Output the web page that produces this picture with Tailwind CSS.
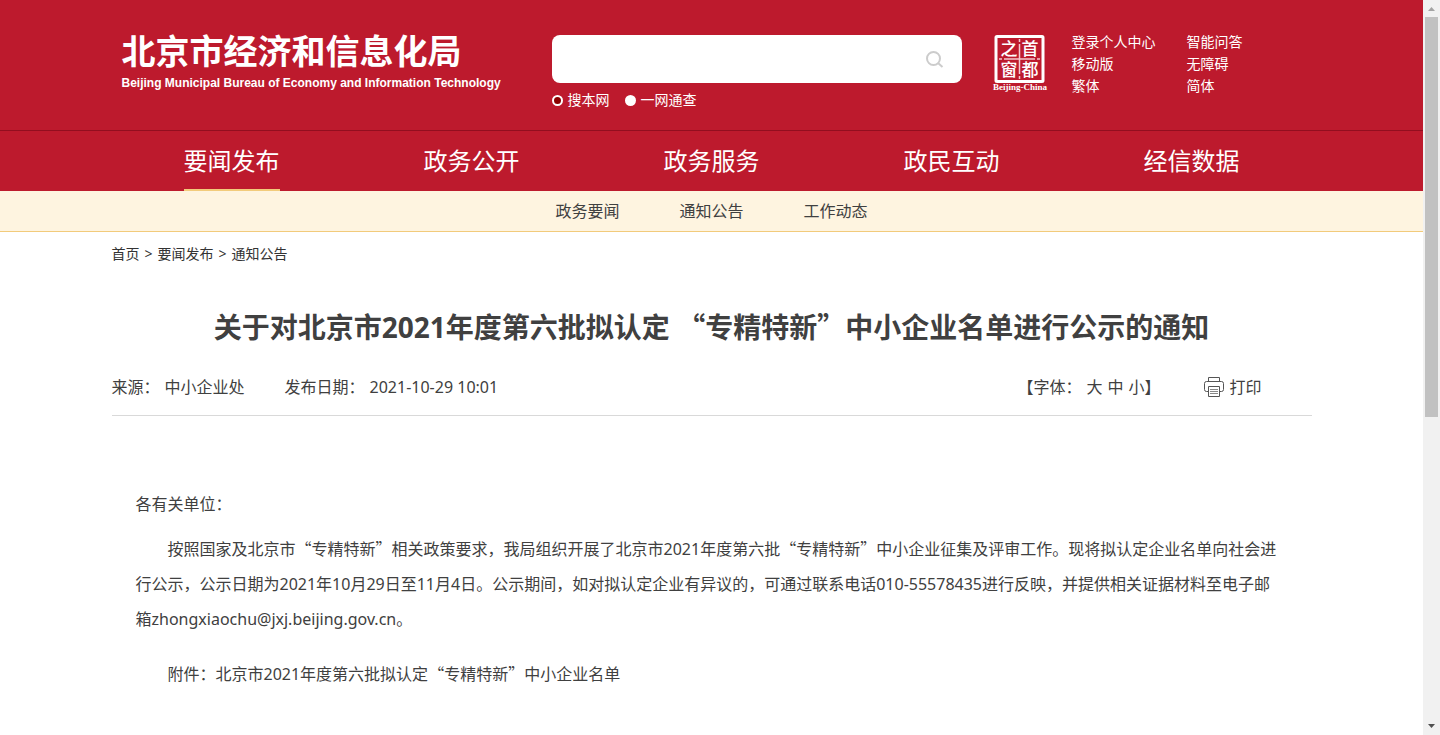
<!DOCTYPE html>
<html lang="zh-CN">

<head>
  <meta charset="UTF-8">
  <meta name="viewport" content="width=device-width, initial-scale=1.0">
  <title>关于对北京市2021年度第六批拟认定 “专精特新”中小企业名单进行公示的通知</title>
  <script src="https://cdn.jsdelivr.net/npm/@tailwindcss/browser@4"></script>
</head>

<body class="flex bg-white text-[#404040] font-['Noto_Sans','Noto_Sans_CJK_SC',sans-serif]">
  <div class="flex-1 min-w-0 min-h-screen">

    <!-- 头部 -->
    <header class="bg-[#bd1a2d] text-white">
      <div class="max-w-[1200px] h-[130px] mx-auto flex items-start pt-[35px]">
        <a href="#" class="block w-[440px] shrink-0 pl-[10px] -mt-1">
          <span class="block text-[34px] leading-10 font-bold whitespace-nowrap">北京市经济和信息化局</span>
          <span class="block mt-1 text-[12px] leading-4 font-bold whitespace-nowrap font-['Liberation_Sans',Arial,sans-serif]">Beijing Municipal Bureau of Economy and Information Technology</span>
        </a>

        <!-- 搜索 -->
        <form class="w-[410px] shrink-0 text-sm">
          <div class="flex items-center h-12 rounded-lg bg-white">
            <input type="text" aria-label="搜索" class="flex-1 h-full px-4 text-base text-[#333] outline-none">
            <button type="button" aria-label="搜索" class="w-14 h-full flex items-center justify-center">
              <svg class="w-5 h-5" viewBox="0 0 20 20" fill="none" stroke="#ccc" stroke-width="2">
                <circle cx="9.500" cy="9.500" r="6.500" />
                <path d="M14 14l4.500 4" />
              </svg>
            </button>
          </div>
          <div class="flex gap-[15px] mt-[7px] leading-5">
            <label class="flex items-center gap-[5px]">
              <input type="radio" name="range" checked class="appearance-none w-[11px] h-[11px] rounded-full bg-white checked:bg-[#8b0000] checked:border-2 border-white">搜本网
            </label>
            <label class="flex items-center gap-[5px]">
              <input type="radio" name="range" class="appearance-none w-[11px] h-[11px] rounded-full bg-white checked:bg-[#8b0000] checked:border-2 border-white">一网通查
            </label>
          </div>
        </form>

        <!-- 首都之窗 -->
        <a href="#" class="block ml-[30px] shrink-0">
          <svg class="w-14 h-[58px]" viewBox="0 0 56 58" fill="#fff">
            <rect x="4" y="1.500" width="47" height="45" rx="1" fill="none" stroke="#fff" stroke-width="3" />
            <path d="M7 24h3M12 24h31M45 24h3M27.500 4v3M27.500 9v30M27.500 41v3" stroke="#f3c9ce" stroke-width="1.500" />
            <g font-family="Noto Sans CJK SC, sans-serif" font-size="17" font-weight="500" text-anchor="middle">
              <text x="17" y="20">之</text>
              <text x="38" y="20">首</text>
              <text x="17" y="41">窗</text>
              <text x="38" y="41">都</text>
            </g>
            <text x="28" y="55" font-family="Liberation Serif, serif" font-size="9" font-weight="bold" text-anchor="middle">Beijing-China</text>
          </svg>
        </a>

        <div class="grid grid-cols-[115px_auto] ml-[24px] -mt-1 text-sm leading-[22px] whitespace-nowrap">
          <a href="#">登录个人中心</a>
          <a href="#">智能问答</a>
          <a href="#">移动版</a>
          <a href="#">无障碍</a>
          <a href="#">繁体</a>
          <a href="#">简体</a>
        </div>
      </div>

      <!-- 主导航 -->
      <nav class="border-t border-[#920e1f]">
        <ul class="max-w-[1200px] mx-auto grid grid-cols-5 justify-items-center text-2xl leading-14">
          <li><a href="#" class="block pt-0.5 border-b-2 border-[#f2cb7b]">要闻发布</a></li>
          <li><a href="#" class="block pt-0.5">政务公开</a></li>
          <li><a href="#" class="block pt-0.5">政务服务</a></li>
          <li><a href="#" class="block pt-0.5">政民互动</a></li>
          <li><a href="#" class="block pt-0.5">经信数据</a></li>
        </ul>
      </nav>
    </header>

    <!-- 二级导航 -->
    <nav class="bg-[#fef4e0] border-b border-[#f2cb7b]">
      <ul class="flex justify-center gap-[60px] leading-10">
        <li><a href="#">政务要闻</a></li>
        <li><a href="#">通知公告</a></li>
        <li><a href="#">工作动态</a></li>
      </ul>
    </nav>

    <main class="max-w-[1200px] mx-auto">
      <!-- 面包屑 -->
      <div class="flex gap-[5px] pt-3 text-sm leading-5 text-[#333]">
        <a href="#">首页</a>
        <span>&gt;</span>
        <a href="#">要闻发布</a>
        <span>&gt;</span>
        <a href="#">通知公告</a>
      </div>

      <h1 class="mt-[43px] text-[28px] leading-10 font-bold text-center">关于对北京市2021年度第六批拟认定 <span class="leading-none font-['Noto_Sans_CJK_SC']">“专精特新”</span>中小企业名单进行公示的通知</h1>

      <!-- 来源、日期、字号、打印 -->
      <div class="flex items-center justify-between mt-3 h-[57px] border-b border-[#d9d9d9]">
        <div class="flex gap-10">
          <p class="flex gap-[5px]"><span>来源：</span><span>中小企业处</span></p>
          <p class="flex gap-[5px]"><span>发布日期：</span><span>2021-10-29 10:01</span></p>
        </div>
        <div class="flex items-center pr-[50px]">
          <div class="flex gap-[5px]">
            <span>【字体：</span>
            <button type="button">大</button>
            <button type="button">中</button>
            <span><button type="button">小</button>】</span>
          </div>
          <button type="button" class="flex items-center gap-[5px] ml-11">
            <svg class="w-5 h-5" viewBox="0 0 20 20" fill="none" stroke="#555">
              <path d="M4.500 4.500v-4h11v4M4.500 14.500h-2a2 2 0 0 1-2-2v-6a2 2 0 0 1 2-2h15a2 2 0 0 1 2 2v6a2 2 0 0 1-2 2h-2" />
              <path d="M4.500 9.500h11v10h-11z" />
              <path d="M6 12.500h8M6 14.500h8M6 16.500h8" stroke="#888" />
            </svg>
            打印
          </button>
        </div>
      </div>

      <!-- 正文 -->
      <article class="pl-6 pr-8 pt-[71px] leading-[35px]">
        <p>各有关单位：</p>
        <p class="indent-8 mt-[10px]">按照国家及北京市<span class="leading-none font-['Noto_Sans_CJK_SC']">“专精特新”</span>相关政策要求，我局组织开展了北京市2021年度第六批<span class="leading-none font-['Noto_Sans_CJK_SC']">“专精特新”</span>中小企业征集及评审工作。现将拟认定企业名单向社会进行公示，公示日期为2021年10月29日至11月4日。公示期间，如对拟认定企业有异议的，可通过联系电话010-55578435进行反映，并提供相关证据材料至电子邮箱zhongxiaochu@jxj.beijing.gov.cn。</p>
        <p class="indent-8 mt-5">附件：<a href="#">北京市2021年度第六批拟认定<span class="leading-none font-['Noto_Sans_CJK_SC']">“专精特新”</span>中小企业名单</a></p>
      </article>
    </main>
  </div>

  <!-- 滚动条 -->
  <div class="sticky top-0 w-[17px] h-screen shrink-0 flex flex-col items-center bg-[#f1f1f1]">
    <svg class="w-[17px] h-[17px] shrink-0" viewBox="0 0 17 17" fill="#a3a3a3"><path d="M5 11l3.500-4 3.500 4z" /></svg>
    <div class="w-[13px] h-[400px] bg-[#c1c1c1]"></div>
    <svg class="w-[17px] h-[17px] shrink-0 mt-auto" viewBox="0 0 17 17" fill="#505050"><path d="M5 6l3.500 4 3.500-4z" /></svg>
  </div>
</body>

</html>
